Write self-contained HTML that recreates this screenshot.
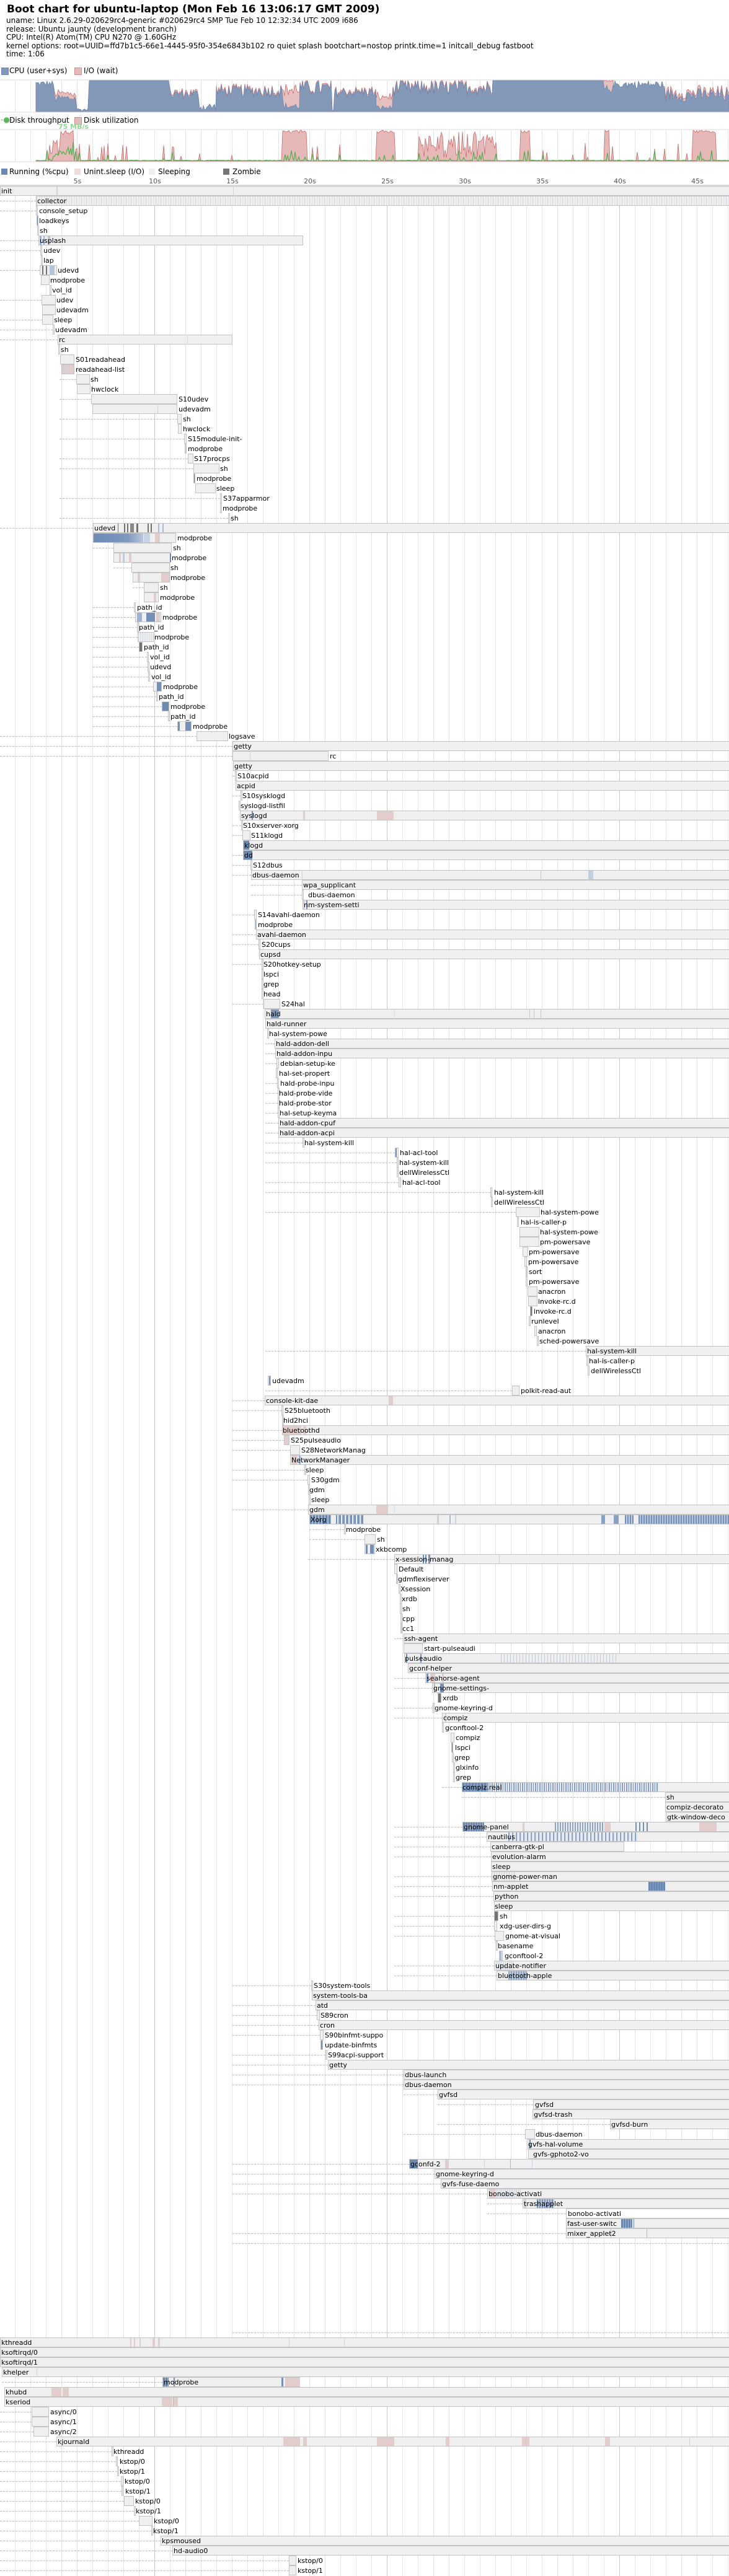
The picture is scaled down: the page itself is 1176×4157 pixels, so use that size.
<!DOCTYPE html>
<html><head><meta charset="utf-8">
<style>
html,body{margin:0;padding:0;background:#fff}
body{width:1176px;height:4157px;position:relative;overflow:hidden;font-family:"DejaVu Sans","Liberation Sans",sans-serif}
.h{position:absolute;white-space:nowrap;color:#000}
.grid{position:absolute;left:0;width:1176px;background-image:repeating-linear-gradient(90deg,transparent 0 24px,#e3e3e3 24px 25px)}
.maj{position:absolute;width:1px;background:#c9c9c9}
.r{position:absolute;left:0;height:16px;width:1176px}
.r i,.r b{position:absolute;top:0;height:16px;font-style:normal;font-weight:normal}
.b{border:1px solid #c4c4c4;background:#efefef;box-sizing:border-box}
.c{background:#7590b8;top:1px!important;height:14px!important}
.p{background:#e2cdcd;top:1px!important;height:14px!important}
.k{background:#737373;top:1px!important;height:14px!important}
.d{top:8px!important;height:0!important;border-top:1px dashed #bdbdbd}
.t{font-size:11px;line-height:17px;color:#000;white-space:nowrap}
.sq{position:absolute;width:10px;height:10px}
.ax{position:absolute;top:286px;font-size:11px;color:#555;width:40px;text-align:center}
</style></head><body>

<div class="h" style="left:11px;top:5px;font-size:17px;font-weight:bold">Boot chart for ubuntu-laptop (Mon Feb 16 13:06:17 GMT 2009)</div>
<div class="h" style="left:10px;top:27px;font-size:12px;line-height:13.5px">uname: Linux 2.6.29-020629rc4-generic #020629rc4 SMP Tue Feb 10 12:32:34 UTC 2009 i686<br>release: Ubuntu jaunty (development branch)<br>CPU: Intel(R) Atom(TM) CPU N270 @ 1.60GHz<br>kernel options: root=UUID=ffd7b1c5-66e1-4445-95f0-354e6843b102 ro quiet splash bootchart=nostop printk.time=1 initcall_debug fastboot<br>time: 1:06</div>

<div class="sq" style="left:2px;top:109px;background:#7f98bb;border:1px solid #6a87b0"></div>
<div class="h" style="left:15px;top:107px;font-size:12px">CPU (user+sys)</div>
<div class="sq" style="left:120px;top:109px;background:#e3bcbc;border:1px solid #d08a8a"></div>
<div class="h" style="left:135px;top:107px;font-size:12px">I/O (wait)</div>

<div class="h" style="left:1px;top:186px;font-size:12px;color:#5cb85c">-&#9679;-</div>
<div class="h" style="left:15px;top:187px;font-size:12px">Disk throughput</div>
<div class="sq" style="left:120px;top:189px;background:#e3bcbc;border:1px solid #d08a8a"></div>
<div class="h" style="left:135px;top:187px;font-size:12px">Disk utilization</div>
<div class="h" style="left:94px;top:198px;font-size:11px;font-weight:bold;color:#90d890">75 MB/s</div>

<div class="sq" style="left:2px;top:272px;background:#6a8ab5"></div>
<div class="h" style="left:15px;top:270px;font-size:12px">Running (%cpu)</div>
<div class="sq" style="left:120px;top:272px;background:#efdcdc"></div>
<div class="h" style="left:135px;top:270px;font-size:12px">Unint.sleep (I/O)</div>
<div class="sq" style="left:240px;top:272px;background:#f0f0f0"></div>
<div class="h" style="left:255px;top:270px;font-size:12px">Sleeping</div>
<div class="sq" style="left:360px;top:272px;background:#777"></div>
<div class="h" style="left:375px;top:270px;font-size:12px">Zombie</div>

<div class="ax" style="left:105px">5s</div><div class="ax" style="left:230px">10s</div><div class="ax" style="left:355px">15s</div><div class="ax" style="left:480px">20s</div><div class="ax" style="left:605px">25s</div><div class="ax" style="left:730px">30s</div><div class="ax" style="left:855px">35s</div><div class="ax" style="left:980px">40s</div><div class="ax" style="left:1105px">45s</div>

<!-- charts -->
<div class="grid" style="top:129px;height:51px"></div>
<div class="grid" style="top:209px;height:51px"></div>
<div style="position:absolute;left:0;top:128px;width:1176px;height:2px;background:#ececec"></div>
<div style="position:absolute;left:0;top:180px;width:1176px;height:2px;background:#ececec"></div>
<div style="position:absolute;left:0;top:208px;width:1176px;height:2px;background:#ececec"></div>
<div style="position:absolute;left:0;top:260px;width:1176px;height:2px;background:#ececec"></div>
<svg id="ch" width="1176" height="300" style="position:absolute;left:0;top:0">
<g id="cpu"></g><g id="dsk"></g>
</svg>

<!-- process grid -->
<div class="grid" style="top:300px;height:3857px"></div>
<div class="maj" style="left:249px;top:300px;height:3857px"></div>
<div class="maj" style="left:624px;top:300px;height:3857px"></div>
<div class="maj" style="left:999px;top:300px;height:3857px"></div>
<div style="position:absolute;left:0;top:298px;width:1176px;height:2px;background:#dcdcdc"></div>

<div class="r" style="top:300px"><i class="b" style="left:0;width:1180px"></i><i class="p" style="left:91px;width:2px"></i><i style="left:376px;width:1px;background:#c8d4e4"></i><b class="t" style="left:2px">init</b></div>
<div class="r" style="top:316px"><i class="d" style="left:0;width:58px"></i><i class="b" style="left:58px;width:1122px;background:repeating-linear-gradient(90deg,#cfd9e6 0 1px,#efefef 1px 4px,#dde4ee 4px 5px,#efefef 5px 8px)"></i><b class="t" style="left:60px">collector</b></div>
<div class="r" style="top:332px"><i class="d" style="left:0;width:58px"></i><i class="b" style="left:58px;width:3px"></i><b class="t" style="left:63px">console_setup</b></div>
<div class="r" style="top:348px"><i class="b" style="left:59px;width:3px"></i><i class="c" style="left:60px;width:1px"></i><b class="t" style="left:63px">loadkeys</b></div>
<div class="r" style="top:364px"><i class="b" style="left:60px;width:3px"></i><b class="t" style="left:64px">sh</b></div>
<div class="r" style="top:380px"><i class="d" style="left:0;width:62px"></i><i class="b" style="left:62px;width:427px"></i><i class="c" style="left:64px;width:3px;background:#9fb3cf"></i><i class="c" style="left:70px;width:2px;background:#9fb3cf"></i><i class="c" style="left:77px;width:4px;background:#b5c4da"></i><b class="t" style="left:64px">usplash</b></div>
<div class="r" style="top:396px"><i class="d" style="left:0;width:65px"></i><i class="b" style="left:65px;width:3px"></i><b class="t" style="left:70px">udev</b></div>
<div class="r" style="top:412px"><i class="b" style="left:66px;width:3px"></i><b class="t" style="left:70px">lap</b></div>
<div class="r" style="top:428px"><i class="d" style="left:0;width:64px"></i><i class="b" style="left:64px;width:28px"></i><i class="k" style="left:68px;width:2px"></i><i class="k" style="left:74px;width:2px"></i><i class="c" style="left:80px;width:8px;background:#b5c4da"></i><b class="t" style="left:93px">udevd</b></div>
<div class="r" style="top:444px"><i class="b" style="left:66px;width:14px"></i><b class="t" style="left:81px">modprobe</b></div>
<div class="r" style="top:460px"><i class="b" style="left:80px;width:3px"></i><b class="t" style="left:84px">vol_id</b></div>
<div class="r" style="top:476px"><i class="d" style="left:0;width:67px"></i><i class="b" style="left:67px;width:23px"></i><b class="t" style="left:91px">udev</b></div>
<div class="r" style="top:492px"><i class="b" style="left:68px;width:22px"></i><b class="t" style="left:91px">udevadm</b></div>
<div class="r" style="top:508px"><i class="d" style="left:0;width:68px"></i><i class="b" style="left:68px;width:18px"></i><b class="t" style="left:87px">sleep</b></div>
<div class="r" style="top:524px"><i class="d" style="left:0;width:85px"></i><i class="b" style="left:85px;width:3px"></i><b class="t" style="left:89px">udevadm</b></div>
<div class="r" style="top:540px"><i class="d" style="left:0;width:93px"></i><i class="b" style="left:93px;width:282px"></i><i class="p" style="left:95px;width:1px"></i><i style="left:302px;width:1px;background:#d8dde5"></i><b class="t" style="left:95px">rc</b></div>
<div class="r" style="top:556px"><i class="b" style="left:94px;width:3px"></i><b class="t" style="left:98px">sh</b></div>
<div class="r" style="top:572px"><i class="b" style="left:97px;width:23px"></i><b class="t" style="left:122px">S01readahead</b></div>
<div class="r" style="top:588px"><i class="b" style="left:99px;width:21px;background:#e2cdcd"></i><i class="c" style="left:104px;width:1px;background:#c8d4e4"></i><b class="t" style="left:122px">readahead-list</b></div>
<div class="r" style="top:604px"><i class="d" style="left:96px;width:27px"></i><i class="b" style="left:123px;width:22px"></i><b class="t" style="left:146px">sh</b></div>
<div class="r" style="top:620px"><i class="b" style="left:124px;width:22px"></i><b class="t" style="left:147px">hwclock</b></div>
<div class="r" style="top:636px"><i class="d" style="left:96px;width:51px"></i><i class="b" style="left:147px;width:139px"></i><b class="t" style="left:288px">S10udev</b></div>
<div class="r" style="top:652px"><i class="b" style="left:149px;width:137px"></i><i style="left:254px;width:1px;background:#d0d0d0"></i><b class="t" style="left:288px">udevadm</b></div>
<div class="r" style="top:668px"><i class="d" style="left:96px;width:190px"></i><i class="b" style="left:286px;width:7px"></i><b class="t" style="left:295px">sh</b></div>
<div class="r" style="top:684px"><i class="b" style="left:287px;width:6px"></i><b class="t" style="left:295px">hwclock</b></div>
<div class="r" style="top:700px"><i class="d" style="left:96px;width:201px"></i><i class="b" style="left:297px;width:4px"></i><b class="t" style="left:303px">S15module-init-</b></div>
<div class="r" style="top:716px"><i class="b" style="left:298px;width:3px;background:#e2cdcd"></i><b class="t" style="left:303px">modprobe</b></div>
<div class="r" style="top:732px"><i class="d" style="left:96px;width:207px"></i><i class="b" style="left:303px;width:9px"></i><b class="t" style="left:313px">S17procps</b></div>
<div class="r" style="top:748px"><i class="d" style="left:96px;width:216px"></i><i class="b" style="left:312px;width:42px"></i><b class="t" style="left:355px">sh</b></div>
<div class="r" style="top:764px"><i class="b" style="left:312px;width:3px;background:#6a87b0"></i><b class="t" style="left:317px">modprobe</b></div>
<div class="r" style="top:780px"><i class="b" style="left:315px;width:33px"></i><b class="t" style="left:349px">sleep</b></div>
<div class="r" style="top:796px"><i class="d" style="left:96px;width:259px"></i><i class="b" style="left:355px;width:3px"></i><b class="t" style="left:360px">S37apparmor</b></div>
<div class="r" style="top:812px"><i class="b" style="left:355px;width:3px"></i><b class="t" style="left:359px">modprobe</b></div>
<div class="r" style="top:828px"><i class="d" style="left:96px;width:272px"></i><i class="b" style="left:368px;width:3px"></i><b class="t" style="left:372px">sh</b></div>
<div class="r" style="top:844px"><i class="d" style="left:0;width:150px"></i><i class="b" style="left:150px;width:1030px"></i><i class="k" style="left:190px;width:1px"></i><i class="k" style="left:200px;width:2px"></i><i class="k" style="left:205px;width:2px"></i><i class="k" style="left:210px;width:6px;background:#888"></i><i class="k" style="left:220px;width:3px"></i><i class="k" style="left:238px;width:2px"></i><i class="k" style="left:243px;width:2px"></i><i class="c" style="left:255px;width:2px;background:#a9bad2"></i><i class="c" style="left:262px;width:2px;background:#a9bad2"></i><b class="t" style="left:152px">udevd</b></div>
<div class="r" style="top:860px"><i class="b" style="left:150px;width:134px"></i><i class="c" style="left:151px;width:80px;background:linear-gradient(90deg,#6d8bb6,#7f99be 70%,#b8c7dc)"></i><i class="p" style="left:250px;width:8px"></i><i class="c" style="left:232px;width:10px;background:#c8d4e4"></i><b class="t" style="left:286px">modprobe</b></div>
<div class="r" style="top:876px"><i class="d" style="left:150px;width:33px"></i><i class="b" style="left:183px;width:94px"></i><b class="t" style="left:279px">sh</b></div>
<div class="r" style="top:892px"><i class="b" style="left:183px;width:92px"></i><i class="p" style="left:192px;width:3px"></i><i class="c" style="left:198px;width:3px;background:#c0cde0"></i><i class="p" style="left:208px;width:4px"></i><i class="c" style="left:274px;width:2px;background:#6a87b0"></i><b class="t" style="left:277px">modprobe</b></div>
<div class="r" style="top:908px"><i class="d" style="left:183px;width:29px"></i><i class="b" style="left:212px;width:62px"></i><b class="t" style="left:275px">sh</b></div>
<div class="r" style="top:924px"><i class="b" style="left:214px;width:60px"></i><i class="p" style="left:222px;width:4px"></i><i class="p" style="left:260px;width:13px"></i><b class="t" style="left:275px">modprobe</b></div>
<div class="r" style="top:940px"><i class="d" style="left:214px;width:18px"></i><i class="b" style="left:232px;width:24px"></i><b class="t" style="left:258px">sh</b></div>
<div class="r" style="top:956px"><i class="b" style="left:232px;width:24px"></i><i class="p" style="left:248px;width:4px"></i><b class="t" style="left:258px">modprobe</b></div>
<div class="r" style="top:972px"><i class="d" style="left:150px;width:66px"></i><i class="b" style="left:216px;width:3px"></i><b class="t" style="left:221px">path_id</b></div>
<div class="r" style="top:988px"><i class="d" style="left:150px;width:68px"></i><i class="b" style="left:218px;width:42px"></i><i class="c" style="left:221px;width:8px;background:#9fb3cf"></i><i class="c" style="left:236px;width:14px"></i><i class="p" style="left:252px;width:6px"></i><b class="t" style="left:262px">modprobe</b></div>
<div class="r" style="top:1004px"><i class="d" style="left:150px;width:71px"></i><i class="b" style="left:221px;width:3px"></i><b class="t" style="left:224px">path_id</b></div>
<div class="r" style="top:1020px"><i class="d" style="left:150px;width:72px"></i><i class="b" style="left:222px;width:26px;background:repeating-linear-gradient(90deg,#d3dce8 0 1px,#efefef 1px 3px)"></i><b class="t" style="left:249px">modprobe</b></div>
<div class="r" style="top:1036px"><i class="d" style="left:150px;width:74px"></i><i class="b" style="left:224px;width:6px;background:#737373"></i><b class="t" style="left:232px">path_id</b></div>
<div class="r" style="top:1052px"><i class="d" style="left:150px;width:87px"></i><i class="b" style="left:237px;width:3px"></i><b class="t" style="left:242px">vol_id</b></div>
<div class="r" style="top:1068px"><i class="d" style="left:150px;width:88px"></i><i class="b" style="left:238px;width:3px"></i><b class="t" style="left:242px">udevd</b></div>
<div class="r" style="top:1084px"><i class="d" style="left:150px;width:89px"></i><i class="b" style="left:239px;width:3px"></i><b class="t" style="left:244px">vol_id</b></div>
<div class="r" style="top:1100px"><i class="d" style="left:150px;width:97px"></i><i class="b" style="left:247px;width:14px"></i><i class="c" style="left:253px;width:7px"></i><b class="t" style="left:263px">modprobe</b></div>
<div class="r" style="top:1116px"><i class="d" style="left:150px;width:102px"></i><i class="b" style="left:252px;width:3px"></i><b class="t" style="left:256px">path_id</b></div>
<div class="r" style="top:1132px"><i class="d" style="left:150px;width:111px"></i><i class="b" style="left:261px;width:12px"></i><i class="c" style="left:262px;width:10px;background:#6d8ab4"></i><b class="t" style="left:275px">modprobe</b></div>
<div class="r" style="top:1148px"><i class="d" style="left:150px;width:121px"></i><i class="b" style="left:271px;width:3px"></i><b class="t" style="left:275px">path_id</b></div>
<div class="r" style="top:1164px"><i class="d" style="left:150px;width:136px"></i><i class="b" style="left:286px;width:23px"></i><i class="c" style="left:287px;width:3px"></i><i class="c" style="left:299px;width:9px"></i><b class="t" style="left:311px">modprobe</b></div>
<div class="r" style="top:1180px"><i class="d" style="left:0;width:317px"></i><i class="b" style="left:317px;width:51px"></i><b class="t" style="left:369px">logsave</b></div>
<div class="r" style="top:1196px"><i class="d" style="left:0;width:375px"></i><i class="b" style="left:375px;width:805px"></i><b class="t" style="left:377px">getty</b></div>
<div class="r" style="top:1212px"><i class="d" style="left:0;width:375px"></i><i class="b" style="left:375px;width:155px"></i><i style="left:403px;width:1px;background:#d0d0d0"></i><b class="t" style="left:532px">rc</b></div>
<div class="r" style="top:1228px"><i class="b" style="left:376px;width:804px"></i><b class="t" style="left:378px">getty</b></div>
<div class="r" style="top:1244px"><i class="d" style="left:375px;width:4px"></i><i class="b" style="left:379px;width:3px"></i><b class="t" style="left:383px">S10acpid</b></div>
<div class="r" style="top:1260px"><i class="b" style="left:380px;width:800px"></i><b class="t" style="left:382px">acpid</b></div>
<div class="r" style="top:1276px"><i class="d" style="left:375px;width:13px"></i><i class="b" style="left:388px;width:3px"></i><b class="t" style="left:391px">S10sysklogd</b></div>
<div class="r" style="top:1292px"><i class="b" style="left:385px;width:3px"></i><b class="t" style="left:388px">syslogd-listfil</b></div>
<div class="r" style="top:1308px"><i class="b" style="left:387px;width:793px"></i><i class="c" style="left:406px;width:2px"></i><i class="p" style="left:489px;width:3px"></i><i class="p" style="left:608px;width:27px"></i><b class="t" style="left:389px">syslogd</b></div>
<div class="r" style="top:1324px"><i class="d" style="left:375px;width:14px"></i><i class="b" style="left:389px;width:3px"></i><b class="t" style="left:392px">S10xserver-xorg</b></div>
<div class="r" style="top:1340px"><i class="d" style="left:375px;width:16px"></i><i class="b" style="left:391px;width:13px"></i><b class="t" style="left:405px">S11klogd</b></div>
<div class="r" style="top:1356px"><i class="b" style="left:392px;width:788px"></i><i class="c" style="left:393px;width:9px;background:#6a87b0"></i><b class="t" style="left:394px">klogd</b></div>
<div class="r" style="top:1372px"><i class="d" style="left:375px;width:17px"></i><i class="b" style="left:392px;width:788px"></i><i class="c" style="left:393px;width:14px;background:#6a87b0"></i><b class="t" style="left:394px">dd</b></div>
<div class="r" style="top:1388px"><i class="d" style="left:375px;width:29px"></i><i class="b" style="left:404px;width:3px"></i><b class="t" style="left:408px">S12dbus</b></div>
<div class="r" style="top:1404px"><i class="d" style="left:375px;width:30px"></i><i class="b" style="left:405px;width:775px"></i><i style="left:487px;width:1px;background:#c8d4e4"></i><i style="left:872px;width:1px;background:#c8c8c8"></i><i class="c" style="left:949px;width:8px;background:#c3cfe0"></i><b class="t" style="left:407px">dbus-daemon</b></div>
<div class="r" style="top:1420px"><i class="d" style="left:405px;width:82px"></i><i class="b" style="left:487px;width:693px"></i><b class="t" style="left:489px">wpa_supplicant</b></div>
<div class="r" style="top:1436px"><i class="d" style="left:405px;width:82px"></i><i class="b" style="left:487px;width:3px"></i><b class="t" style="left:497px">dbus-daemon</b></div>
<div class="r" style="top:1452px"><i class="b" style="left:488px;width:692px"></i><i class="p" style="left:489px;width:3px"></i><i class="c" style="left:494px;width:2px"></i><b class="t" style="left:490px">nm-system-setti</b></div>
<div class="r" style="top:1468px"><i class="d" style="left:375px;width:35px"></i><i class="b" style="left:410px;width:4px"></i><b class="t" style="left:416px">S14avahi-daemon</b></div>
<div class="r" style="top:1484px"><i class="b" style="left:411px;width:3px;background:#9fb3cf"></i><b class="t" style="left:416px">modprobe</b></div>
<div class="r" style="top:1500px"><i class="d" style="left:375px;width:38px"></i><i class="b" style="left:413px;width:767px"></i><b class="t" style="left:415px">avahi-daemon</b></div>
<div class="r" style="top:1516px"><i class="d" style="left:375px;width:42px"></i><i class="b" style="left:417px;width:3px"></i><b class="t" style="left:422px">S20cups</b></div>
<div class="r" style="top:1532px"><i class="b" style="left:418px;width:762px"></i><b class="t" style="left:420px">cupsd</b></div>
<div class="r" style="top:1548px"><i class="d" style="left:375px;width:47px"></i><i class="b" style="left:422px;width:3px"></i><b class="t" style="left:425px">S20hotkey-setup</b></div>
<div class="r" style="top:1564px"><i class="b" style="left:422px;width:3px"></i><b class="t" style="left:425px">lspci</b></div>
<div class="r" style="top:1580px"><i class="b" style="left:422px;width:3px"></i><b class="t" style="left:425px">grep</b></div>
<div class="r" style="top:1596px"><i class="b" style="left:422px;width:3px"></i><b class="t" style="left:425px">head</b></div>
<div class="r" style="top:1612px"><i class="d" style="left:375px;width:50px"></i><i class="b" style="left:425px;width:27px"></i><b class="t" style="left:454px">S24hal</b></div>
<div class="r" style="top:1628px"><i class="b" style="left:427px;width:753px"></i><i class="c" style="left:437px;width:13px;background:#7d97bb"></i><i style="left:636px;width:1px;background:#d8e0ea"></i><i style="left:854px;width:1px;background:#c8c8c8"></i><i style="left:861px;width:1px;background:#c8c8c8"></i><i style="left:872px;width:1px;background:#c8c8c8"></i><b class="t" style="left:429px">hald</b></div>
<div class="r" style="top:1644px"><i class="b" style="left:428px;width:752px"></i><b class="t" style="left:430px">hald-runner</b></div>
<div class="r" style="top:1660px"><i class="b" style="left:431px;width:3px"></i><b class="t" style="left:434px">hal-system-powe</b></div>
<div class="r" style="top:1676px"><i class="d" style="left:428px;width:15px"></i><i class="b" style="left:443px;width:737px"></i><b class="t" style="left:445px">hald-addon-dell</b></div>
<div class="r" style="top:1692px"><i class="d" style="left:428px;width:16px"></i><i class="b" style="left:444px;width:736px"></i><b class="t" style="left:446px">hald-addon-inpu</b></div>
<div class="r" style="top:1708px"><i class="d" style="left:428px;width:18px"></i><i class="b" style="left:446px;width:4px"></i><b class="t" style="left:452px">debian-setup-ke</b></div>
<div class="r" style="top:1724px"><i class="b" style="left:445px;width:3px"></i><b class="t" style="left:450px">hal-set-propert</b></div>
<div class="r" style="top:1740px"><i class="d" style="left:428px;width:19px"></i><i class="b" style="left:447px;width:3px"></i><b class="t" style="left:452px">hald-probe-inpu</b></div>
<div class="r" style="top:1756px"><i class="d" style="left:428px;width:20px"></i><i class="b" style="left:448px;width:3px"></i><b class="t" style="left:450px">hald-probe-vide</b></div>
<div class="r" style="top:1772px"><i class="d" style="left:428px;width:20px"></i><i class="b" style="left:448px;width:3px"></i><b class="t" style="left:450px">hald-probe-stor</b></div>
<div class="r" style="top:1788px"><i class="d" style="left:428px;width:20px"></i><i class="b" style="left:448px;width:3px"></i><b class="t" style="left:451px">hal-setup-keyma</b></div>
<div class="r" style="top:1804px"><i class="d" style="left:428px;width:21px"></i><i class="b" style="left:449px;width:731px"></i><b class="t" style="left:451px">hald-addon-cpuf</b></div>
<div class="r" style="top:1820px"><i class="d" style="left:428px;width:21px"></i><i class="b" style="left:449px;width:731px"></i><b class="t" style="left:451px">hald-addon-acpi</b></div>
<div class="r" style="top:1836px"><i class="d" style="left:428px;width:60px"></i><i class="b" style="left:488px;width:3px"></i><b class="t" style="left:491px">hal-system-kill</b></div>
<div class="r" style="top:1852px"><i class="d" style="left:428px;width:209px"></i><i class="b" style="left:637px;width:6px"></i><i class="c" style="left:638px;width:2px"></i><b class="t" style="left:645px">hal-acl-tool</b></div>
<div class="r" style="top:1868px"><i class="d" style="left:428px;width:212px"></i><i class="b" style="left:640px;width:3px"></i><b class="t" style="left:644px">hal-system-kill</b></div>
<div class="r" style="top:1884px"><i class="b" style="left:640px;width:3px"></i><b class="t" style="left:644px">dellWirelessCtl</b></div>
<div class="r" style="top:1900px"><i class="d" style="left:428px;width:215px"></i><i class="b" style="left:643px;width:4px"></i><b class="t" style="left:649px">hal-acl-tool</b></div>
<div class="r" style="top:1916px"><i class="d" style="left:428px;width:363px"></i><i class="b" style="left:791px;width:3px"></i><b class="t" style="left:797px">hal-system-kill</b></div>
<div class="r" style="top:1932px"><i class="b" style="left:792px;width:3px"></i><b class="t" style="left:797px">dellWirelessCtl</b></div>
<div class="r" style="top:1948px"><i class="d" style="left:428px;width:404px"></i><i class="b" style="left:832px;width:39px"></i><b class="t" style="left:872px">hal-system-powe</b></div>
<div class="r" style="top:1964px"><i class="b" style="left:834px;width:3px"></i><b class="t" style="left:840px">hal-is-caller-p</b></div>
<div class="r" style="top:1980px"><i class="b" style="left:838px;width:32px"></i><b class="t" style="left:871px">hal-system-powe</b></div>
<div class="r" style="top:1996px"><i class="b" style="left:838px;width:32px"></i><b class="t" style="left:871px">pm-powersave</b></div>
<div class="r" style="top:2012px"><i class="b" style="left:843px;width:9px"></i><b class="t" style="left:853px">pm-powersave</b></div>
<div class="r" style="top:2028px"><i class="b" style="left:846px;width:4px"></i><b class="t" style="left:852px">pm-powersave</b></div>
<div class="r" style="top:2044px"><i class="b" style="left:848px;width:3px;background:#e2cdcd"></i><b class="t" style="left:853px">sort</b></div>
<div class="r" style="top:2060px"><i class="b" style="left:848px;width:3px"></i><b class="t" style="left:853px">pm-powersave</b></div>
<div class="r" style="top:2076px"><i class="b" style="left:851px;width:16px"></i><b class="t" style="left:868px">anacron</b></div>
<div class="r" style="top:2092px"><i class="b" style="left:852px;width:15px"></i><b class="t" style="left:868px">invoke-rc.d</b></div>
<div class="r" style="top:2108px"><i class="b" style="left:855px;width:4px;background:#737373"></i><b class="t" style="left:861px">invoke-rc.d</b></div>
<div class="r" style="top:2124px"><i class="b" style="left:853px;width:3px"></i><b class="t" style="left:857px">runlevel</b></div>
<div class="r" style="top:2140px"><i class="b" style="left:862px;width:4px"></i><b class="t" style="left:868px">anacron</b></div>
<div class="r" style="top:2156px"><i class="b" style="left:866px;width:3px"></i><b class="t" style="left:870px">sched-powersave</b></div>
<div class="r" style="top:2172px"><i class="d" style="left:428px;width:517px"></i><i class="b" style="left:945px;width:235px"></i><b class="t" style="left:947px">hal-system-kill</b></div>
<div class="r" style="top:2188px"><i class="b" style="left:946px;width:3px"></i><b class="t" style="left:950px">hal-is-caller-p</b></div>
<div class="r" style="top:2204px"><i class="b" style="left:948px;width:3px"></i><b class="t" style="left:953px">dellWirelessCtl</b></div>
<div class="r" style="top:2220px"><i class="b" style="left:432px;width:5px"></i><i class="c" style="left:434px;width:2px"></i><b class="t" style="left:439px">udevadm</b></div>
<div class="r" style="top:2236px"><i class="d" style="left:428px;width:398px"></i><i class="b" style="left:826px;width:12px"></i><b class="t" style="left:840px">polkit-read-aut</b></div>
<div class="r" style="top:2252px"><i class="d" style="left:375px;width:52px"></i><i class="b" style="left:427px;width:753px"></i><i class="p" style="left:627px;width:7px"></i><b class="t" style="left:429px">console-kit-dae</b></div>
<div class="r" style="top:2268px"><i class="d" style="left:375px;width:79px"></i><i class="b" style="left:454px;width:3px"></i><b class="t" style="left:459px">S25bluetooth</b></div>
<div class="r" style="top:2284px"><i class="b" style="left:455px;width:3px"></i><b class="t" style="left:457px">hid2hci</b></div>
<div class="r" style="top:2300px"><i class="d" style="left:375px;width:80px"></i><i class="b" style="left:455px;width:725px"></i><i class="p" style="left:456px;width:30px"></i><i class="p" style="left:489px;width:5px"></i><b class="t" style="left:456px">bluetoothd</b></div>
<div class="r" style="top:2316px"><i class="d" style="left:375px;width:83px"></i><i class="b" style="left:458px;width:9px;background:#e2cdcd"></i><b class="t" style="left:469px">S25pulseaudio</b></div>
<div class="r" style="top:2332px"><i class="d" style="left:375px;width:93px"></i><i class="b" style="left:468px;width:16px"></i><b class="t" style="left:486px">S28NetworkManag</b></div>
<div class="r" style="top:2348px"><i class="b" style="left:468px;width:712px"></i><i class="p" style="left:470px;width:10px"></i><i class="c" style="left:482px;width:3px;background:#9fb3cf"></i><b class="t" style="left:470px">NetworkManager</b></div>
<div class="r" style="top:2364px"><i class="d" style="left:375px;width:116px"></i><i class="b" style="left:491px;width:3px"></i><b class="t" style="left:493px">sleep</b></div>
<div class="r" style="top:2380px"><i class="d" style="left:375px;width:121px"></i><i class="b" style="left:496px;width:4px"></i><b class="t" style="left:502px">S30gdm</b></div>
<div class="r" style="top:2396px"><i class="b" style="left:497px;width:3px"></i><b class="t" style="left:499px">gdm</b></div>
<div class="r" style="top:2412px"><i class="b" style="left:498px;width:3px"></i><b class="t" style="left:502px">sleep</b></div>
<div class="r" style="top:2428px"><i class="d" style="left:375px;width:122px"></i><i class="b" style="left:497px;width:683px"></i><i class="p" style="left:607px;width:19px"></i><i style="left:636px;width:1px;background:#d8e0ea"></i><b class="t" style="left:499px">gdm</b></div>
<div class="r" style="top:2444px"><i class="b" style="left:499px;width:681px"></i><i class="c" style="left:500px;width:34px;background:repeating-linear-gradient(90deg,#6a87b0 0 3px,#a8bad3 3px 5px)"></i><i class="c" style="left:542px;width:46px;background:repeating-linear-gradient(90deg,#7490b8 0 2px,#efefef 2px 4px,#8aa2c4 4px 6px)"></i><i class="c" style="left:705px;width:3px;background:#c8d4e4"></i><i class="c" style="left:725px;width:2px;background:#a9bad2"></i><i class="c" style="left:734px;width:2px;background:#c8d4e4"></i><i class="c" style="left:970px;width:6px;background:#8aa2c4"></i><i class="c" style="left:990px;width:8px;background:#8aa2c4"></i><i class="c" style="left:1008px;width:14px;background:repeating-linear-gradient(90deg,#7490b8 0 2px,#c0cde0 2px 4px)"></i><i class="c" style="left:1030px;width:146px;background:repeating-linear-gradient(90deg,#7490b8 0 2px,#b5c4da 2px 4px)"></i><b class="t" style="left:501px">Xorg</b></div>
<div class="r" style="top:2460px"><i class="d" style="left:499px;width:56px"></i><i class="b" style="left:555px;width:3px"></i><b class="t" style="left:558px">modprobe</b></div>
<div class="r" style="top:2476px"><i class="d" style="left:499px;width:89px"></i><i class="b" style="left:588px;width:18px"></i><b class="t" style="left:608px">sh</b></div>
<div class="r" style="top:2492px"><i class="b" style="left:588px;width:17px"></i><i class="c" style="left:590px;width:3px"></i><i class="c" style="left:597px;width:6px"></i><b class="t" style="left:606px">xkbcomp</b></div>
<div class="r" style="top:2508px"><i class="d" style="left:497px;width:139px"></i><i class="b" style="left:636px;width:544px"></i><i class="c" style="left:682px;width:2px"></i><i class="c" style="left:686px;width:2px"></i><i class="c" style="left:691px;width:3px"></i><i style="left:805px;width:1px;background:#c8d4e4"></i><b class="t" style="left:638px">x-session-manag</b></div>
<div class="r" style="top:2524px"><i class="b" style="left:636px;width:5px"></i><b class="t" style="left:643px">Default</b></div>
<div class="r" style="top:2540px"><i class="b" style="left:639px;width:3px;background:#c8d4e4"></i><b class="t" style="left:642px">gdmflexiserver</b></div>
<div class="r" style="top:2556px"><i class="b" style="left:643px;width:3px"></i><b class="t" style="left:646px">Xsession</b></div>
<div class="r" style="top:2572px"><i class="b" style="left:645px;width:3px"></i><b class="t" style="left:648px">xrdb</b></div>
<div class="r" style="top:2588px"><i class="b" style="left:645px;width:3px"></i><b class="t" style="left:649px">sh</b></div>
<div class="r" style="top:2604px"><i class="b" style="left:646px;width:3px"></i><b class="t" style="left:649px">cpp</b></div>
<div class="r" style="top:2620px"><i class="b" style="left:646px;width:3px;background:#e2cdcd"></i><b class="t" style="left:649px">cc1</b></div>
<div class="r" style="top:2636px"><i class="d" style="left:636px;width:15px"></i><i class="b" style="left:651px;width:529px"></i><b class="t" style="left:652px">ssh-agent</b></div>
<div class="r" style="top:2652px"><i class="b" style="left:651px;width:31px"></i><b class="t" style="left:684px">start-pulseaudi</b></div>
<div class="r" style="top:2668px"><i class="b" style="left:652px;width:528px"></i><i class="c" style="left:655px;width:2px"></i><i class="c" style="left:678px;width:2px"></i><i class="c" style="left:808px;width:188px;background:repeating-linear-gradient(90deg,#c3cfe0 0 1px,#efefef 1px 5px)"></i><b class="t" style="left:653px">pulseaudio</b></div>
<div class="r" style="top:2684px"><i class="b" style="left:658px;width:522px"></i><b class="t" style="left:660px">gconf-helper</b></div>
<div class="r" style="top:2700px"><i class="d" style="left:636px;width:50px"></i><i class="b" style="left:686px;width:494px"></i><i class="c" style="left:688px;width:3px"></i><i class="p" style="left:694px;width:8px"></i><i class="p" style="left:713px;width:3px"></i><b class="t" style="left:688px">seahorse-agent</b></div>
<div class="r" style="top:2716px"><i class="d" style="left:636px;width:61px"></i><i class="b" style="left:697px;width:483px"></i><i class="c" style="left:700px;width:2px;background:#a9bad2"></i><i class="c" style="left:710px;width:6px"></i><b class="t" style="left:699px">gnome-settings-</b></div>
<div class="r" style="top:2732px"><i class="b" style="left:706px;width:6px;background:#737373"></i><b class="t" style="left:714px">xrdb</b></div>
<div class="r" style="top:2748px"><i class="d" style="left:636px;width:62px"></i><i class="b" style="left:698px;width:3px"></i><b class="t" style="left:701px">gnome-keyring-d</b></div>
<div class="r" style="top:2764px"><i class="d" style="left:636px;width:77px"></i><i class="b" style="left:713px;width:467px"></i><i class="p" style="left:718px;width:2px"></i><b class="t" style="left:715px">compiz</b></div>
<div class="r" style="top:2780px"><i class="b" style="left:713px;width:3px"></i><b class="t" style="left:718px">gconftool-2</b></div>
<div class="r" style="top:2796px"><i class="b" style="left:727px;width:6px"></i><b class="t" style="left:735px">compiz</b></div>
<div class="r" style="top:2812px"><i class="b" style="left:728px;width:3px;background:#6a87b0"></i><b class="t" style="left:734px">lspci</b></div>
<div class="r" style="top:2828px"><i class="b" style="left:729px;width:3px"></i><b class="t" style="left:733px">grep</b></div>
<div class="r" style="top:2844px"><i class="b" style="left:731px;width:3px"></i><b class="t" style="left:735px">glxinfo</b></div>
<div class="r" style="top:2860px"><i class="b" style="left:731px;width:3px"></i><b class="t" style="left:735px">grep</b></div>
<div class="r" style="top:2876px"><i class="d" style="left:713px;width:32px"></i><i class="b" style="left:745px;width:435px"></i><i class="c" style="left:746px;width:40px;background:repeating-linear-gradient(90deg,#6a87b0 0 3px,#8aa2c4 3px 5px)"></i><i class="c" style="left:786px;width:276px;background:repeating-linear-gradient(90deg,#8aa2c4 0 2px,#dde4ee 2px 4px,#7490b8 4px 5px,#efefef 5px 7px)"></i><i class="p" style="left:977px;width:4px"></i><b class="t" style="left:746px">compiz.real</b></div>
<div class="r" style="top:2892px"><i class="d" style="left:745px;width:328px"></i><i class="b" style="left:1073px;width:107px"></i><b class="t" style="left:1075px">sh</b></div>
<div class="r" style="top:2908px"><i class="b" style="left:1073px;width:107px"></i><b class="t" style="left:1075px">compiz-decorato</b></div>
<div class="r" style="top:2924px"><i class="b" style="left:1074px;width:106px"></i><b class="t" style="left:1076px">gtk-window-deco</b></div>
<div class="r" style="top:2940px"><i class="d" style="left:636px;width:110px"></i><i class="b" style="left:746px;width:434px"></i><i class="c" style="left:747px;width:34px;background:repeating-linear-gradient(90deg,#6a87b0 0 3px,#a8bad3 3px 4px)"></i><i class="p" style="left:843px;width:3px"></i><i class="c" style="left:895px;width:80px;background:repeating-linear-gradient(90deg,#8aa2c4 0 2px,#efefef 2px 4px)"></i><i class="p" style="left:975px;width:10px"></i><i class="c" style="left:1025px;width:20px;background:repeating-linear-gradient(90deg,#7490b8 0 2px,#efefef 2px 6px)"></i><i class="p" style="left:1128px;width:28px"></i><b class="t" style="left:748px">gnome-panel</b></div>
<div class="r" style="top:2956px"><i class="d" style="left:636px;width:149px"></i><i class="b" style="left:785px;width:395px"></i><i class="c" style="left:820px;width:210px;background:repeating-linear-gradient(90deg,#8aa2c4 0 2px,#dde4ee 2px 4px,#efefef 4px 6px)"></i><b class="t" style="left:787px">nautilus</b></div>
<div class="r" style="top:2972px"><i class="d" style="left:636px;width:155px"></i><i class="b" style="left:791px;width:216px"></i><b class="t" style="left:793px">canberra-gtk-pl</b></div>
<div class="r" style="top:2988px"><i class="d" style="left:636px;width:156px"></i><i class="b" style="left:792px;width:388px"></i><b class="t" style="left:794px">evolution-alarm</b></div>
<div class="r" style="top:3004px"><i class="b" style="left:792px;width:388px"></i><b class="t" style="left:794px">sleep</b></div>
<div class="r" style="top:3020px"><i class="d" style="left:636px;width:157px"></i><i class="b" style="left:793px;width:387px"></i><i class="c" style="left:797px;width:34px;background:repeating-linear-gradient(90deg,#c3cfe0 0 1px,#efefef 1px 4px)"></i><b class="t" style="left:795px">gnome-power-man</b></div>
<div class="r" style="top:3036px"><i class="d" style="left:636px;width:158px"></i><i class="b" style="left:794px;width:386px"></i><i class="c" style="left:1046px;width:27px;background:repeating-linear-gradient(90deg,#6a87b0 0 3px,#8aa2c4 3px 4px)"></i><b class="t" style="left:796px">nm-applet</b></div>
<div class="r" style="top:3052px"><i class="d" style="left:636px;width:160px"></i><i class="b" style="left:796px;width:384px"></i><b class="t" style="left:798px">python</b></div>
<div class="r" style="top:3068px"><i class="b" style="left:797px;width:383px"></i><b class="t" style="left:798px">sleep</b></div>
<div class="r" style="top:3084px"><i class="d" style="left:636px;width:161px"></i><i class="b" style="left:797px;width:7px;background:#737373"></i><b class="t" style="left:806px">sh</b></div>
<div class="r" style="top:3100px"><i class="d" style="left:636px;width:161px"></i><i class="b" style="left:797px;width:5px"></i><b class="t" style="left:806px">xdg-user-dirs-g</b></div>
<div class="r" style="top:3116px"><i class="d" style="left:636px;width:162px"></i><i class="b" style="left:798px;width:15px"></i><b class="t" style="left:815px">gnome-at-visual</b></div>
<div class="r" style="top:3132px"><i class="b" style="left:800px;width:3px"></i><b class="t" style="left:803px">basename</b></div>
<div class="r" style="top:3148px"><i class="b" style="left:805px;width:6px"></i><i class="c" style="left:806px;width:3px;background:#a9bad2"></i><b class="t" style="left:814px">gconftool-2</b></div>
<div class="r" style="top:3164px"><i class="d" style="left:636px;width:161px"></i><i class="b" style="left:797px;width:383px"></i><i class="c" style="left:800px;width:28px;background:repeating-linear-gradient(90deg,#c3cfe0 0 1px,#efefef 1px 3px)"></i><b class="t" style="left:799px">update-notifier</b></div>
<div class="r" style="top:3180px"><i class="d" style="left:636px;width:165px"></i><i class="b" style="left:801px;width:379px"></i><i class="c" style="left:820px;width:30px;background:repeating-linear-gradient(90deg,#8aa2c4 0 2px,#c3cfe0 2px 4px)"></i><b class="t" style="left:803px">bluetooth-apple</b></div>
<div class="r" style="top:3196px"><i class="d" style="left:375px;width:127px"></i><i class="b" style="left:502px;width:3px"></i><b class="t" style="left:506px">S30system-tools</b></div>
<div class="r" style="top:3212px"><i class="b" style="left:503px;width:677px"></i><b class="t" style="left:505px">system-tools-ba</b></div>
<div class="r" style="top:3228px"><i class="d" style="left:375px;width:134px"></i><i class="b" style="left:509px;width:671px"></i><b class="t" style="left:511px">atd</b></div>
<div class="r" style="top:3244px"><i class="d" style="left:375px;width:136px"></i><i class="b" style="left:511px;width:5px"></i><b class="t" style="left:517px">S89cron</b></div>
<div class="r" style="top:3260px"><i class="d" style="left:375px;width:139px"></i><i class="b" style="left:514px;width:666px"></i><b class="t" style="left:516px">cron</b></div>
<div class="r" style="top:3276px"><i class="d" style="left:375px;width:141px"></i><i class="b" style="left:516px;width:6px"></i><b class="t" style="left:524px">S90binfmt-suppo</b></div>
<div class="r" style="top:3292px"><i class="b" style="left:517px;width:4px"></i><i class="c" style="left:518px;width:2px"></i><b class="t" style="left:524px">update-binfmts</b></div>
<div class="r" style="top:3308px"><i class="d" style="left:375px;width:150px"></i><i class="b" style="left:525px;width:3px"></i><b class="t" style="left:529px">S99acpi-support</b></div>
<div class="r" style="top:3324px"><i class="d" style="left:375px;width:154px"></i><i class="b" style="left:529px;width:651px"></i><b class="t" style="left:531px">getty</b></div>
<div class="r" style="top:3340px"><i class="d" style="left:375px;width:276px"></i><i class="b" style="left:651px;width:529px"></i><b class="t" style="left:653px">dbus-launch</b></div>
<div class="r" style="top:3356px"><i class="d" style="left:375px;width:276px"></i><i class="b" style="left:651px;width:529px"></i><b class="t" style="left:653px">dbus-daemon</b></div>
<div class="r" style="top:3372px"><i class="d" style="left:651px;width:55px"></i><i class="b" style="left:706px;width:474px"></i><b class="t" style="left:708px">gvfsd</b></div>
<div class="r" style="top:3388px"><i class="d" style="left:706px;width:154px"></i><i class="b" style="left:860px;width:320px"></i><b class="t" style="left:863px">gvfsd</b></div>
<div class="r" style="top:3404px"><i class="b" style="left:859px;width:321px"></i><b class="t" style="left:861px">gvfsd-trash</b></div>
<div class="r" style="top:3420px"><i class="d" style="left:706px;width:278px"></i><i class="b" style="left:984px;width:196px"></i><b class="t" style="left:986px">gvfsd-burn</b></div>
<div class="r" style="top:3436px"><i class="d" style="left:651px;width:196px"></i><i class="b" style="left:847px;width:16px"></i><b class="t" style="left:864px">dbus-daemon</b></div>
<div class="r" style="top:3452px"><i class="b" style="left:851px;width:329px"></i><i class="c" style="left:854px;width:2px"></i><b class="t" style="left:852px">gvfs-hal-volume</b></div>
<div class="r" style="top:3468px"><i class="b" style="left:852px;width:328px"></i><b class="t" style="left:860px">gvfs-gphoto2-vo</b></div>
<div class="r" style="top:3484px"><i class="d" style="left:375px;width:285px"></i><i class="b" style="left:660px;width:520px"></i><i class="c" style="left:661px;width:13px;background:#6a87b0"></i><i class="p" style="left:718px;width:6px"></i><i style="left:781px;width:1px;background:#e2cdcd"></i><i style="left:823px;width:1px;background:#a9bad2"></i><i style="left:858px;width:1px;background:#c8d4e4"></i><b class="t" style="left:662px">gconfd-2</b></div>
<div class="r" style="top:3500px"><i class="d" style="left:375px;width:326px"></i><i class="b" style="left:701px;width:479px"></i><b class="t" style="left:703px">gnome-keyring-d</b></div>
<div class="r" style="top:3516px"><i class="d" style="left:375px;width:336px"></i><i class="b" style="left:711px;width:469px"></i><b class="t" style="left:713px">gvfs-fuse-daemo</b></div>
<div class="r" style="top:3532px"><i class="d" style="left:375px;width:411px"></i><i class="b" style="left:786px;width:394px"></i><i class="p" style="left:789px;width:10px"></i><i class="c" style="left:800px;width:42px;background:repeating-linear-gradient(90deg,#c3cfe0 0 1px,#efefef 1px 3px)"></i><b class="t" style="left:788px">bonobo-activati</b></div>
<div class="r" style="top:3548px"><i class="d" style="left:786px;width:57px"></i><i class="b" style="left:843px;width:337px"></i><i class="p" style="left:845px;width:4px"></i><i class="c" style="left:866px;width:28px;background:repeating-linear-gradient(90deg,#7490b8 0 2px,#c3cfe0 2px 4px)"></i><b class="t" style="left:845px">trashapplet</b></div>
<div class="r" style="top:3564px"><i class="d" style="left:786px;width:127px"></i><i class="b" style="left:913px;width:267px;background:#fff"></i><b class="t" style="left:916px">bonobo-activati</b></div>
<div class="r" style="top:3580px"><i class="b" style="left:913px;width:267px"></i><i class="c" style="left:1002px;width:18px;background:repeating-linear-gradient(90deg,#6a87b0 0 3px,#a8bad3 3px 4px)"></i><i class="c" style="left:1022px;width:1px"></i><b class="t" style="left:915px">fast-user-switc</b></div>
<div class="r" style="top:3596px"><i class="d" style="left:375px;width:538px"></i><i class="b" style="left:913px;width:267px"></i><i class="c" style="left:985px;width:1px;background:#a9bad2"></i><i class="c" style="left:1043px;width:1px;background:#a9bad2"></i><b class="t" style="left:915px">mixer_applet2</b></div>
<div class="r" style="top:3612px"><i class="d" style="left:375px;width:805px"></i></div>
<div class="r" style="top:3756px"><i class="d" style="left:375px;width:805px"></i></div>
<div class="r" style="top:3772px"><i class="b" style="left:0;width:1180px"></i><i class="p" style="left:210px;width:2px"></i><i class="p" style="left:216px;width:2px"></i><i class="p" style="left:225px;width:2px"></i><i class="p" style="left:246px;width:4px"></i><i class="p" style="left:255px;width:3px"></i><i class="p" style="left:466px;width:1px"></i><i class="p" style="left:555px;width:1px"></i><b class="t" style="left:2px">kthreadd</b></div>
<div class="r" style="top:3788px"><i class="b" style="left:0;width:1180px"></i><b class="t" style="left:2px">ksoftirqd/0</b></div>
<div class="r" style="top:3804px"><i class="b" style="left:0;width:1180px"></i><b class="t" style="left:2px">ksoftirqd/1</b></div>
<div class="r" style="top:3820px"><i class="b" style="left:3px;width:1177px"></i><i style="left:59px;width:1px;background:#d0d0d0"></i><b class="t" style="left:5px">khelper</b></div>
<div class="r" style="top:3836px"><i class="d" style="left:3px;width:259px"></i><i class="b" style="left:262px;width:222px"></i><i class="c" style="left:263px;width:9px;background:repeating-linear-gradient(90deg,#6a87b0 0 3px,#a8bad3 3px 4px)"></i><i class="c" style="left:280px;width:2px"></i><i style="left:304px;width:1px;background:#d0d0d0"></i><i class="c" style="left:454px;width:3px"></i><i class="p" style="left:460px;width:24px"></i><b class="t" style="left:264px">modprobe</b></div>
<div class="r" style="top:3852px"><i class="b" style="left:7px;width:1173px"></i><i class="p" style="left:83px;width:16px"></i><i class="p" style="left:101px;width:10px"></i><b class="t" style="left:9px">khubd</b></div>
<div class="r" style="top:3868px"><i class="b" style="left:7px;width:1173px"></i><i class="p" style="left:261px;width:17px"></i><i class="c" style="left:279px;width:1px;background:#a9bad2"></i><i class="p" style="left:280px;width:7px"></i><b class="t" style="left:9px">kseriod</b></div>
<div class="r" style="top:3884px"><i class="d" style="left:0;width:51px"></i><i class="b" style="left:51px;width:28px"></i><b class="t" style="left:81px">async/0</b></div>
<div class="r" style="top:3900px"><i class="d" style="left:0;width:51px"></i><i class="b" style="left:51px;width:28px"></i><b class="t" style="left:81px">async/1</b></div>
<div class="r" style="top:3916px"><i class="d" style="left:0;width:54px"></i><i class="b" style="left:54px;width:25px"></i><b class="t" style="left:81px">async/2</b></div>
<div class="r" style="top:3932px"><i class="d" style="left:0;width:91px"></i><i class="b" style="left:91px;width:1089px"></i><i class="p" style="left:457px;width:27px"></i><i class="p" style="left:489px;width:6px"></i><i class="p" style="left:608px;width:28px"></i><i class="p" style="left:719px;width:6px"></i><i class="p" style="left:842px;width:12px"></i><i class="p" style="left:976px;width:8px"></i><i style="left:1112px;width:1px;background:#d0d0d0"></i><b class="t" style="left:93px">kjournald</b></div>
<div class="r" style="top:3948px"><i class="d" style="left:0;width:180px"></i><i class="b" style="left:180px;width:3px"></i><b class="t" style="left:183px">kthreadd</b></div>
<div class="r" style="top:3964px"><i class="d" style="left:0;width:187px"></i><i class="b" style="left:187px;width:3px"></i><b class="t" style="left:193px">kstop/0</b></div>
<div class="r" style="top:3980px"><i class="d" style="left:0;width:189px"></i><i class="b" style="left:189px;width:3px"></i><b class="t" style="left:193px">kstop/1</b></div>
<div class="r" style="top:3996px"><i class="d" style="left:0;width:195px"></i><i class="b" style="left:195px;width:4px"></i><b class="t" style="left:201px">kstop/0</b></div>
<div class="r" style="top:4012px"><i class="d" style="left:0;width:196px"></i><i class="b" style="left:196px;width:3px"></i><b class="t" style="left:202px">kstop/1</b></div>
<div class="r" style="top:4028px"><i class="d" style="left:0;width:200px"></i><i class="b" style="left:200px;width:16px"></i><b class="t" style="left:218px">kstop/0</b></div>
<div class="r" style="top:4044px"><i class="d" style="left:0;width:216px"></i><i class="b" style="left:216px;width:3px"></i><b class="t" style="left:219px">kstop/1</b></div>
<div class="r" style="top:4060px"><i class="d" style="left:0;width:224px"></i><i class="b" style="left:224px;width:22px"></i><b class="t" style="left:248px">kstop/0</b></div>
<div class="r" style="top:4076px"><i class="d" style="left:0;width:244px"></i><i class="b" style="left:244px;width:3px"></i><b class="t" style="left:247px">kstop/1</b></div>
<div class="r" style="top:4092px"><i class="d" style="left:0;width:259px"></i><i class="b" style="left:259px;width:921px"></i><b class="t" style="left:261px">kpsmoused</b></div>
<div class="r" style="top:4108px"><i class="d" style="left:0;width:278px"></i><i class="b" style="left:278px;width:902px"></i><b class="t" style="left:280px">hd-audio0</b></div>
<div class="r" style="top:4124px"><i class="d" style="left:0;width:466px"></i><i class="b" style="left:466px;width:12px"></i><b class="t" style="left:480px">kstop/0</b></div>
<div class="r" style="top:4140px"><i class="d" style="left:0;width:466px"></i><i class="b" style="left:466px;width:12px"></i><b class="t" style="left:480px">kstop/1</b></div>

<script>
(function(){
var s=12345;function R(){s=(s*1103515245+12345)%2147483648;return s/2147483648;}
var cpu=[[58,88,0.8,1,0],[88,124,0.3,0.55,0.2],[124,144,0,0.12,0],[144,274,1,1,0],[274,322,0.4,0.72,0.06],[322,349,0,0.3,0],[349,457,0.45,0.85,0.06],[457,484,0.05,0.3,0.65],[484,536,0.5,1,0.05],[536,540,0,0.05,0],[540,607,0.45,0.78,0.06],[607,634,0.05,0.2,0.45],[634,795,0.5,1,0.06],[795,975,1,1,0],[975,990,0.6,0.85,0.4],[990,1072,0.75,1,0],[1072,1176,0.3,0.75,0.12]];
var T=130,H=50,B=180,bp=[],ip=[];
cpu.forEach(function(g){for(var x=g[0];x<g[1];x+=2){var b=g[2]+(g[3]-g[2])*R();var io=Math.min(1,b+g[4]*(0.6+0.4*R()));if(g[0]==1100&&false){}bp.push(x+','+(B-b*H).toFixed(1));ip.push(x+','+(B-io*H).toFixed(1));}});
ip.push('1176,'+(B-0.6*H));bp.push('1176,'+(B-0.5*H));
var svg='<polygon points="58,180 '+ip.join(' ')+' 1176,180" fill="#e6bfbf" stroke="#c96c6c" stroke-width="0.8"/>'+
'<polygon points="58,180 '+bp.join(' ')+' 1176,180" fill="#8399b7" stroke="#6c89b2" stroke-width="0.8"/>';
document.getElementById('cpu').innerHTML=svg;
var full=[[79,97,0.2,0.8],[97,120,0.85,1],[456,495,0.9,1],[607,637,0.9,1],[675,802,0.1,0.95],[840,855,0.9,1],[975,983,0.9,1],[1117,1155,0.9,1]];
var DB=260,DH=50,up=[],gp=[];
for(var x=58;x<=1176;x+=2){var v=0.01,g=0.01;var inF=false;full.forEach(function(f){if(x>=f[0]&&x<f[1]){inF=true;v=f[2]+(f[3]-f[2])*R();}});
if(!inF&&R()<0.07)v=0.1+0.5*R();
if(x>=85&&x<120)g=0.15+0.6*R()*(x-85)/35;else if(v>0.3&&R()<0.3)g=0.05+0.3*R();else g=0.01+0.02*R();
up.push(x+','+(DB-v*DH).toFixed(1));gp.push(x+','+(DB-g*DH).toFixed(1));}
document.getElementById('dsk').innerHTML='<polygon points="58,260 '+up.join(' ')+' 1176,260" fill="#e6b8b8" stroke="#c96c6c" stroke-width="0.8"/><polyline points="'+gp.join(' ')+'" fill="none" stroke="#52b052" stroke-width="1.2"/>';
})();
</script>
</body></html>
